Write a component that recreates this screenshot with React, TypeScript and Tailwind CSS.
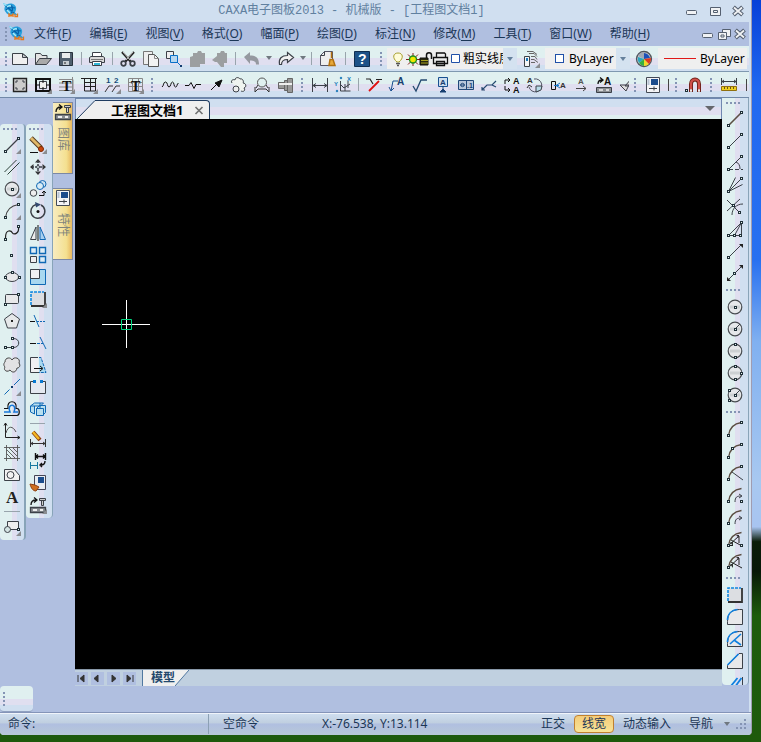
import React from "react";

type Tool = { label: string; icon?: React.ReactNode; flag?: boolean; kind?: "sep" | "grip" | "caret" };

/* small square handle used on most drawing icons */
const N = ({ x, y }: { x: number; y: number }) => (
  <rect x={x - 1} y={y - 1} width="2" height="2" fill="#e8f4f0" stroke="#203038" shapeRendering="crispEdges" />
);

const Icon = ({ children, flag }: { children?: React.ReactNode; flag?: boolean }) => (
  <svg viewBox="0 0 18 18" className="size-[18px] shrink-0" fill="none" stroke="#3c4148" strokeWidth="1" aria-hidden="true">
    {children}
    {flag && <path d="M18 13v5h-5z" fill="#8a8c90" stroke="none" />}
  </svg>
);

const B = "#0f68b4";
const sep: Tool = { label: "", kind: "sep" };
const grip: Tool = { label: "", kind: "grip" };

const T = ({ x, y, s = 9, c = "#111", children }: { x: number; y: number; s?: number; c?: string; children: string }) => (
  <text x={x} y={y} fontSize={s} fill={c} stroke="none" fontWeight="bold" fontFamily="Liberation Sans, sans-serif">
    {children}
  </text>
);

const TSerif = ({ x, y, s }: { x: number; y: number; s: number }) => (
  <text x={x} y={y} fontSize={s} fill="#111" stroke="none" fontWeight="bold" fontFamily="Liberation Serif, serif">T</text>
);

const libraryIcon = (
  <>
    <path d="M2 9c0-3 2-5 5-5M5 1.500l3 2.500l-3 2.500" stroke="#111" strokeWidth="1.300" />
    <path d="M10.500 2.500h6v2h-6zM12.500 4.500h2v5h-2z" fill="#ccc" />
    <path d="M1.500 11.500h15v5h-15z" fill="#8c9094" strokeWidth="1.300" />
    <path d="M4 14h4M11 14h3" stroke="#eee" strokeWidth="2" />
  </>
);
const propsIcon = (
  <>
    <path d="M2.500 1.500h13v15h-13z" fill="#f4f4f6" stroke="#444a55" />
    <path d="M7 3h7v6h-7z" fill="#1c4c8c" stroke="none" />
    <path d="M3.500 3v6h2v-6z" fill="#b8c4d4" stroke="none" />
    <path d="M5 12.500h8M10 10.500v4" />
  </>
);
const filletIcon = (
  <>
    <path d="M2 2h14v14h-14z" fill="#dcdee2" stroke="none" />
    <path d="M2 16h14v-14" stroke="#333" strokeWidth="1.800" />
    <path d="M2 15v-13h13" stroke="#1088e0" strokeDasharray="3 1" strokeWidth="1.600" />
  </>
);

const fileTools: Tool[] = [
  { label: "新建", icon: <><path d="M1.500 3.500h10l5 4v7h-15z" fill="#efefef" /><path d="M11.500 3.500v4h5z" fill="#c4c8cc" /></> },
  { label: "打开", icon: <><path d="M1.500 14.500v-11h5l1.500 2h5v3" fill="#e4e4e4" /><path d="M1.500 14.500l4-6h12l-5 6z" fill="#aaa" /></> },
  { label: "保存", icon: <><path d="M2.500 2.500h13v13h-13z" fill="#50606e" stroke="#28323c" /><path d="M5 3h8v5h-8z" fill="#e8ecec" stroke="none" /><path d="M6 11h6v4h-6z" fill="#c5ccd0" stroke="none" /><path d="M8 12v2" stroke="#222" /></> },
  sep,
  { label: "打印", icon: <><path d="M4.500 7v-4.500h8l1 1v3.500" fill="#fff" /><path d="M1.500 7.500l1.500-1h12l1.500 1v5h-15z" fill="#d8d8d8" /><path d="M4.500 11.500h9v4h-9z" fill="#fff" /><path d="M6 14h6" stroke="#30b8d8" strokeWidth="2" /><path d="M3 9.500h12" stroke="#777" /></> },
  sep,
  { label: "剪切", icon: <><path d="M3 2l9 10M15 2l-9 10" stroke="#222" strokeWidth="2.200" /><path d="M4 2l7 8M14 2l-7 8" stroke="#eee" strokeWidth=".8" /><circle cx="4.500" cy="13.500" r="2.300" strokeWidth="1.700" /><circle cx="13.500" cy="13.500" r="2.300" strokeWidth="1.700" /></> },
  { label: "复制", icon: <><path d="M1.500 1.500h9v13h-9z" fill="#eee" stroke="#777" /><path d="M6.500 4.500h6l4 4v8h-10z" fill="#f2f2f2" stroke="#555" /><path d="M12.500 4.500v4h4" stroke="#888" /></> },
  { label: "带基点复制", icon: <><path d="M1.500 1.500h7v7h-7z" fill="#eee" /><path d="M5.500 5.500h7v7h-7z" fill="#b8d8f0" stroke="#0870c8" /><path d="M12 12l4 4" stroke="#0870c8" /><path d="M15 15h2v2h-2z" fill="#123c70" stroke="none" /></> },
  { label: "粘贴", icon: <path d="M2 7l3-1v-3h4l1-2h3l1 2h3v11h-5v3h-10z" fill="#9c9fa1" stroke="none" /> },
  { label: "选择性粘贴", icon: <path d="M1 10l5-4v-3h3l1-2h3l1 2h2v10h-3v4h-3l-4-5h-2z" fill="#9c9fa1" stroke="none" /> },
  sep,
];

const editTools: Tool[] = [
  { label: "撤销", icon: <path d="M1 7l6-5v3.500c6 0 9 2 9 9h-3c0-3-2-4-6-4v3.500z" fill="#9599a0" stroke="none" /> },
  { label: "撤销列表", kind: "caret" },
  { label: "恢复", icon: <path d="M16.500 7.500l-6-5v3c-6 0-9 3-8 9h2c0-4 3-5 6-5v3z" fill="#f2f2f2" strokeWidth="1.200" /> },
  { label: "恢复列表", kind: "caret" },
  sep,
  { label: "清理", icon: <><path d="M5.500 1.500h8v14h-12v-10z" fill="#eee" stroke="#556" /><path d="M5.500 1.500v4h-4" /><path d="M12.500 2v6M10 15.500l1-6h3l2 6z" fill="#e8a838" stroke="#b07010" strokeWidth="1.500" /></> },
  sep,
  { label: "帮助", icon: <><path d="M1.500 1.500h15v15h-15z" fill="#1d5288" stroke="#102e50" /><T x={5} y={14} s={14} c="#fff">?</T></> },
];

const frameTools: Tool[] = [
  { label: "图幅设置", icon: <><path d="M2.500 2.500h13v13h-13z" fill="#ccc" stroke="#222" strokeWidth="1.400" /><path d="M5 7v-2h2M11 5h2v2M13 11v2h-2M7 13h-2v-2" /></> },
  { label: "调入图框", flag: true, icon: <><path d="M2 3h14v12h-14z" stroke="#111" strokeWidth="2" /><path d="M5.500 5.500h7v7h-7z" fill="#eee" /><path d="M9 3v4M9 11v4M2 9h4M12 9h4" stroke="#111" /></> },
  { label: "标题栏", flag: true, icon: <><path d="M2 3.500h14v11h-14M2 7h14M2 11h14M15.500 1v16" stroke="#888" /><TSerif x={5} y={15} s={14} /></> },
  { label: "参数栏", flag: true, icon: <path d="M1 2.500h16M4.500 3v12h11M15.500 3v12M4.500 6.500h11M4.500 10.500h11M10.500 3v12" stroke="#222" /> },
  { label: "生成序号", flag: true, icon: <><T x={3} y={7} s={8} c="#164a7c">1</T><T x={11} y={7} s={8} c="#164a7c">2</T><path d="M2 16l4-6h4M9 16l4-6h4" stroke="#333" /></> },
  { label: "明细表", flag: true, icon: <><path d="M2.500 2.500h14v13h-14zM2.500 6.500h14M2.500 10.500h14M6.500 3v12M12.500 3v12" stroke="#888" /><TSerif x={5} y={15} s={14} /></> },
];

const drawTools: Tool[] = [
  { label: "波浪线", icon: <path d="M1 11c2-1 1-5 3.500-5s1.500 5 3.500 5s1.500-5 3.500-5s1 5 3 5s1-3 3-4" stroke="#111" /> },
  { label: "双折线", icon: <path d="M1 9.500h4l2-3l3 6l2-4h5" stroke="#111" /> },
  { label: "箭头", icon: <path d="M4 14l8-8M8 7l7-3l-3 7z" fill="#111" stroke="#111" /> },
  { label: "齿形", icon: <><path d="M2 7c-2-3 2-4 3-3c0-3 4-3 5-1c3-1 4 3 3 4c3 0 4 4 1 5c2 3-1 4-3 3" fill="#f0f4f0" /><circle cx="6" cy="13" r="3" fill="#eee" /></> },
  { label: "圆弧拟合", icon: <><circle cx="9" cy="6.500" r="4.500" fill="#dff0f0" stroke="#555" /><path d="M2 11v5l3-3h8l3 3v-5M5 9l-2 3M13 9l2 3" stroke="#333" /></> },
  { label: "孔轴", icon: <><path d="M2.500 6.500h6v6h-6zM8.500 4.500h3v10h-3zM11.500 2.500h5v14h-5z" fill="#999" stroke="#666" /><path d="M3 8h13" stroke="#eee" strokeWidth="2" /></> },
];

const dimTools: Tool[] = [
  { label: "尺寸标注", icon: <path d="M1.500 2v14M16.500 2v14M2 9.500h14M5 7.500l-3 2l3 2M13 7.500l3 2l-3 2" /> },
  { label: "坐标标注", icon: <><path d="M6.500 5v10h10M6 8l4 4l6-4M11 8v7M14 5v7" /><g fill="#1878b8" stroke="#1878b8"><circle cx="3" cy="15" r=".8" /><circle cx="7" cy="2" r=".8" /></g><T x={0} y={10} s={6} c="#1878b8">Y</T><T x={13} y={5} s={6} c="#1878b8">X</T></> },
  sep,
  { label: "倒角标注", icon: <><path d="M1 3h4l3 5M11 3.500h6" stroke="#222" strokeWidth="1.200" /><path d="M4 15l10-10" stroke="#e01010" strokeWidth="1.800" /></> },
  { label: "引出说明", icon: <><path d="M3 15l2-10h5M1 11l2 4l3-3" stroke="#185090" /><T x={9} y={9} s={10} c="#184070">A</T></> },
  { label: "粗糙度", icon: <path d="M2 10l3 5l5-11h6" stroke="#244a70" strokeWidth="1.300" /> },
  { label: "基准代号", icon: <><path d="M4.500 1.500h9v9h-9z" fill="#cde" stroke="#185090" /><T x={6} y={9} s={8} c="#184070">A</T><path d="M9 10v3M6 16h6l-3-3z" fill="#184070" stroke="#184070" /></> },
  { label: "形位公差", icon: <><path d="M1.500 4.500h15v9h-15z" fill="#b8c8dc" stroke="#204878" /><path d="M9.500 5v8M3 9h5" stroke="#204878" /><circle cx="5.500" cy="9" r="1.700" stroke="#204878" /><T x={10} y={12} s={7} c="#184070">.1</T></> },
  { label: "焊接符号", icon: <path d="M2 14l5-5h5l4-4M12 9l4 2M2 11v3h3" stroke="#244a70" strokeWidth="1.200" /> },
  { label: "剖切符号", icon: <><path d="M2 8v-4h5M5 2l2 2l-2 2M2 10v4h5M5 12l2 2l-2 2" stroke="#111" /><T x={10} y={8} s={9}>A</T><T x={10} y={17} s={9}>A</T></> },
  { label: "向视图", icon: <><path d="M8 3a6.500 6.500 0 1 1-5 8" stroke="#556" /><path d="M10 10h6l-1 4l-5 2z" fill="#b8dce8" /><path d="M1 12l2-3l3 2" stroke="#333" /><T x={1} y={7} s={8} c="#333">A</T></> },
  { label: "中心孔", icon: <><path d="M2.500 5.500h4v8h-4z" stroke="#111" /><path d="M5 9.500h5M11 7l-4 2.500l4 2.500" stroke="#1878c8" /><T x={11} y={12} s={8} c="#333">A</T></> },
  { label: "旋转符号", icon: <><T x={6} y={8} s={8} c="#555">A</T><path d="M4 12.500h10M11 10l3 2.500l-3 2.500" stroke="#444" /></> },
  { label: "标注编辑", icon: <><path d="M3 8c0-3 1-4 4-4M5 1.500l3 2.500l-3 2.500" stroke="#111" strokeWidth="1.300" /><T x={9} y={9} s={10}>A</T><path d="M1.500 11.500h15v5h-15z" fill="#8c9094" /><path d="M4 14h4M11 14h3" stroke="#eee" strokeWidth="1.500" /></> },
];

const circle = (extra: React.ReactNode) => (
  <>
    <circle cx="9" cy="9" r="6.800" fill="#e6e8ea" stroke="#484c50" strokeWidth="1.200" />
    <path d="M4 9h10" stroke="#ccd0d2" strokeWidth="3" />
    {extra}
  </>
);

const drawColumn: Tool[] = [
  { label: "直线", flag: true, icon: <><path d="M2.500 15.500l13-13" strokeWidth="1.200" /><N x={2.5} y={15.5} /><N x={15.5} y={2.5} /></> },
  { label: "平行线", icon: <path d="M1.500 14l12-12M4.500 16.500l12-12" stroke="#2c4038" /> },
  { label: "圆", flag: true, icon: circle(<N x={9} y={9} />) },
  { label: "圆弧", flag: true, icon: <><path d="M2.500 15.500c1-8 6-12 13-13" stroke="#444" strokeWidth="1.200" /><N x={2.5} y={15.5} /><N x={15.5} y={2.5} /></> },
  { label: "样条", icon: <><path d="M2.500 14c0-10 6-7 7-5s7 1 6-6" stroke="#222" strokeWidth="1.200" /><N x={2.5} y={15} /><N x={15.5} y={2.5} /></> },
  { label: "点", icon: <N x={8.5} y={9.5} /> },
  { label: "椭圆", icon: <><ellipse cx="9" cy="9" rx="6.500" ry="4.500" fill="#e8e8ea" /><N x={2.5} y={9.5} /><N x={9} y={4.5} /><N x={16} y={9.5} /></> },
  { label: "矩形", icon: <><rect x="2.500" y="4.500" width="13" height="9" rx="1" fill="#e8e8ea" /><N x={2.5} y={14.5} /><N x={15.5} y={4.5} /></> },
  { label: "多边形", icon: <><path d="M9 1.500l7.500 5.500l-3 9h-9l-3-9z" fill="#e6e8ea" /><path d="M8 8h2v2h-2z" fill="#222" stroke="none" /></> },
  { label: "多段线", icon: <><path d="M2.500 13.500h8c7 0 7-9 0-9h-1" /><N x={2.5} y={13.5} /><N x={9.5} y={13.5} /><N x={9.5} y={4.5} /></> },
  { label: "云线", icon: <path d="M9 4c2-4 9-2 7 3c2 3 0 5-2 5c-1 5-5 5-7 2c-3 3-7 0-5-3c-2-2-1-4 0-5c0-5 6-5 7-2z" fill="#e2e2e4" stroke="#444" /> },
  { label: "中心线", flag: true, icon: <><path d="M1.500 16.500l5-5M11 7l6-6" stroke={B} /><path d="M8 8h2v2h-2z" fill="#123c70" stroke="none" /></> },
  { label: "等距线", icon: <><path d="M1 8.500h4c-2-9 10-9 8 0h1c3 0 3 7 0 7h-13" stroke="#111" strokeWidth="1.200" /><path d="M1 12h6c-4-9 8-9 4 0h4" stroke="#1878d8" strokeWidth="1.600" /></> },
  { label: "公式曲线", icon: <><path d="M2.500 1v14.500h14M1 3.500l1.500-2.500l1.500 2.500M14.500 14l2.500 1.500l-2.500 1.500" stroke="#222" /><path d="M3 11c2-8 7-7 10-1" stroke="#555" /></> },
  { label: "剖面线", icon: <path d="M1 3.500h16M1 14.500h16M3.500 1v16M14.500 1v16M4 10l5 5M4 6l8 8M6 4l8 8M10 4l4 4" stroke="#555" strokeWidth=".9" /> },
  { label: "局部放大", icon: <><path d="M1.500 3.500h10l5 6v5h-15z" fill="#f2f2f2" /><circle cx="7.500" cy="9" r="3.500" /></> },
  { label: "文字", icon: <text x="3" y="15" fontSize="17" fontWeight="bold" fill="#222" stroke="none" fontFamily="Liberation Serif, serif">A</text> },
  sep,
  { label: "块", flag: true, icon: <><path d="M4.500 3.500h11v8h-11z" fill="#eee" /><circle cx="4.500" cy="11.500" r="3" fill="#d4e4e4" /><N x={15.5} y={11.5} /></> },
];

const editColumn: Tool[] = [
  { label: "删除", flag: true, icon: <><path d="M2 2l10 10" stroke="#553c20" strokeWidth="5" /><path d="M2 2l9 9" stroke="#e0b868" strokeWidth="3" /><circle cx="12" cy="13" r="2.500" fill="#c84810" stroke="#802800" /><path d="M1 16.500h8" stroke="#111" /></> },
  { label: "平移", icon: <><path d="M9 1l3 3.500h-6zM9 17l3-3.500h-6zM1 9l3.500-3v6zM17 9l-3.500-3v6z" fill="#333" stroke="none" /><path d="M9 3v4M9 11v4M3 9h4M11 9h4" strokeWidth="1.500" strokeDasharray="2 1" /><circle cx="9" cy="9" r="1.500" /></> },
  { label: "平移复制", icon: <><circle cx="4.500" cy="13" r="3.300" fill="#eee" /><circle cx="13.500" cy="4" r="3.500" fill="#cfe4f4" stroke={B} /><circle cx="11" cy="6" r="3.500" fill="#d8ecf6" stroke={B} /><path d="M10 15.500h5v-4M13 13l2-2l2 2" stroke="#111" /></> },
  { label: "旋转", icon: <><path d="M7 2.500a7 7 0 1 0 5 .5" strokeWidth="1.500" /><path d="M6 0l6 2.500l-5 3z" fill="#344a70" stroke="none" /><circle cx="9" cy="9.500" r="1.500" fill="#111" stroke="none" /></> },
  { label: "镜像", icon: <><path d="M7 3v12.500h-5.500z" fill="#eee" /><path d="M11 3v12.500h5.500z" fill="#a8d0f0" stroke={B} /><path d="M9 1v16" stroke="#111" /></> },
  { label: "阵列", icon: <><path d="M1.500 1.500h6v6h-6zM10.500 1.500h6v6h-6zM10.500 10.500h6v6h-6z" fill="#dcecf6" stroke={B} strokeWidth="1.400" /><path d="M1.500 10.500h6v6h-6z" fill="#eee" /></> },
  { label: "缩放", icon: <><path d="M1.500 1.500h15v15h-15z" fill="#a8d8f0" stroke={B} /><path d="M1.500 1.500h9v9h-9z" fill="#f0f0f2" /></> },
  { label: "圆角过渡", flag: true, icon: filletIcon },
  { label: "裁剪", icon: <><path d="M1 9.500h5" stroke="#111" /><path d="M8 9.500h9" stroke={B} strokeDasharray="2 1" /><path d="M5 3l5 12" stroke={B} /></> },
  { label: "延伸", icon: <><path d="M1 9.500h6" stroke="#111" /><path d="M8 9.500h6" stroke={B} strokeDasharray="3 1" /><path d="M11 3l6 12" stroke={B} /></> },
  { label: "拉伸", icon: <><path d="M10 1.500h2l5 15h-7" fill="#a8d8f0" stroke={B} strokeDasharray="3 1" /><path d="M9 1.500h-7.500v15h8.500" fill="#f0f0f2" /><path d="M5 12.500h8M11 10l3 2.500l-3 2.500" stroke="#111" /></> },
  { label: "打断", icon: <><path d="M4 3.500h-2.500v12h15v-12h-2.500" fill="#e4e8f0" /><path d="M4 2h3v3h-3zM11 2h3v3h-3z" fill="#0878d0" stroke="none" /></> },
  { label: "分解", icon: <path d="M1.500 6l4-3h9l-3 3zM1.500 6v6l4 2v-8M7.500 8.500h7v7h-7zM7.500 8.500l3-3h6v7l-2 2M11 3v6" fill="#b8dff0" stroke={B} /> },
  sep,
  { label: "标注修改", icon: <><path d="M1.500 9v8M16.500 9v8M2 13.500h14M4 12l-2 1.500l2 1.500M14 12l2 1.500l-2 1.500" stroke="#333" /><path d="M4 2l7 8" stroke="#8a4010" strokeWidth="4" /><path d="M4 2l6 7" stroke="#f4b820" strokeWidth="2.400" /></> },
  { label: "尺寸驱动", icon: <><path d="M6.500 1v7M16.500 1v7M7 4.500h9M9 2.500l-2 2l2 2M14 2.500l2 2l-2 2M16 9c0 3-1 4-4 4M13 11l-2 2l2 2" stroke="#111" strokeWidth="1.400" /><path d="M1.500 10v7M8.500 10v7M2 13.500h6" stroke="#1878a0" /></> },
  { label: "特性匹配", icon: <><path d="M5.500 1.500h11v14h-11z" fill="#e8ecf2" stroke="#445" /><path d="M9 3h6v6h-6z" fill="#1c4c8c" stroke="none" /><path d="M1 10l5 1l4 2l-3 4c-3 0-5-3-6-7z" fill="#d07020" stroke="#904010" /></> },
  { label: "图库", flag: true, icon: libraryIcon },
];

const arc = <path d="M2.500 15.500c1-8 6-12 13-13" stroke="#5a4c40" strokeWidth="1.300" />;

const rightColumn: Tool[] = [
  { label: "两点线", icon: <><path d="M2.500 15.500l13-13" stroke="#5c5044" strokeWidth="1.600" /><N x={2.5} y={15.5} /><N x={15.5} y={2.5} /></> },
  { label: "单线", icon: <><path d="M2.500 15.500l13-13" /><N x={2.5} y={15.5} /><N x={15.5} y={2.5} /></> },
  { label: "角度线", icon: <><path d="M2.500 15.500l13-13M10 8c3 1 4 4 4 7" /><path d="M3 15.500h14" strokeDasharray="4 2" /><N x={2.5} y={15.5} /><N x={15.5} y={2.5} /></> },
  { label: "角等分线", icon: <><path d="M2.500 15.500l7-14M2.500 15.500l13-13M2.500 15.500l14-7" /><N x={2.5} y={15.5} /><N x={15.5} y={2.5} /></> },
  { label: "切线", icon: <><path d="M1 2l12 12M1 13l13-12M6 17c0-6 4-11 11-11" /><N x={7} y={7.5} /><N x={13.5} y={14} /></> },
  { label: "等分线", icon: <><path d="M2.500 15.500l13-13v13zM8.500 15.500l7-13" /><N x={2.5} y={15.5} /><N x={8.5} y={15.5} /><N x={14.5} y={15.5} /><N x={15.5} y={2.5} /></> },
  { label: "射线", icon: <><path d="M2.500 15.500l13-13" /><N x={2.5} y={15.5} /><path d="M13 2h4v4z" fill="#222" stroke="none" /></> },
  { label: "构造线", icon: <><path d="M2.500 15.500l13-13" /><N x={8.5} y={9.5} /><path d="M13 1h4v4zM1 13v4h4z" fill="#222" stroke="none" /></> },
  grip,
  { label: "圆心半径", icon: circle(<N x={9} y={9} />) },
  { label: "圆心直径", icon: circle(<><path d="M9 9l5-5" /><N x={9} y={9} /></>) },
  { label: "两点圆", icon: circle(<><N x={9} y={2.5} /><N x={9} y={15.5} /></>) },
  { label: "三点圆", icon: circle(<><N x={9} y={2.5} /><N x={9} y={15.5} /><N x={15.5} y={9} /></>) },
  { label: "两点半径圆", icon: circle(<><path d="M9 9l5-5" /><N x={9} y={9} /><N x={3.5} y={4} /><N x={3.5} y={14} /></>) },
  grip,
  { label: "三点弧", icon: <>{arc}<N x={2.5} y={15.5} /><N x={15.5} y={2.5} /></> },
  { label: "起点终点弧", icon: <>{arc}<N x={2.5} y={15.5} /><N x={6.5} y={6.5} /><N x={15.5} y={2.5} /></> },
  { label: "圆心弧", icon: <>{arc}<path d="M6 8l11 8" /><N x={2.5} y={15.5} /><N x={15.5} y={2.5} /></> },
  { label: "起点弧", icon: <>{arc}<path d="M9 16c0-5 2-6 6-6M13 8l3 2l-3 2" /><N x={2.5} y={15.5} /><N x={15.5} y={15.5} /></> },
  { label: "起点半径弧", icon: <>{arc}<path d="M9 16c0-5 2-6 6-6M13 8l3 2l-3 2" /><N x={2.5} y={15.5} /></> },
  { label: "弧角度", icon: <>{arc}<path d="M3 15l10-9v7M5 10l11 6M3 15.500h4" stroke="#222" /><path d="M10 5h3v3zM4 12h3v4z" fill="#333" stroke="none" /><N x={2.5} y={15.5} /><N x={15.5} y={15} /></> },
  { label: "弧半径", icon: <>{arc}<path d="M3 15l10-9v7M5 10l11 6" stroke="#222" /><path d="M10 5h3v3zM4 12h3v4z" fill="#333" stroke="none" /><N x={2.5} y={15.5} /></> },
  grip,
  { label: "圆角", icon: filletIcon },
  { label: "多圆角", icon: <><path d="M16.500 1.500v15h-15v-3c0-8 4-12 12-12z" fill="#e8e8ea" /><path d="M1.500 12c0-6 4-10 10-10.500" stroke="#1080e0" strokeWidth="1.600" /></> },
  { label: "倒角过渡", icon: <><path d="M16.500 1.500v15h-15v-3c0-8 4-12 12-12z" fill="#e8e8ea" /><path d="M1.500 12c0-6 4-10 10-10.500M4 14l11-10M8 10l7 5" stroke="#1080e0" strokeWidth="1.600" /></> },
  { label: "倒角", icon: <><path d="M13 1.500h3.500v15h-15v-3z" fill="#e8e8ea" /><path d="M1.500 13l11-11" stroke="#1080e0" strokeWidth="1.600" /></> },
  { label: "多倒角", icon: <><path d="M16.500 3v14" /><path d="M2.500 15l9-11M7.500 15l8-11" stroke="#1080e0" strokeWidth="1.800" /></> },
];

const ToolButton = ({ tool, className }: { tool: Tool; className: string }) => (
  <button type="button" aria-label={tool.label} className={`flex items-center justify-center shrink-0 hover:bg-white/50 ${className}`}>
    <Icon flag={tool.flag}>{tool.icon}</Icon>
  </button>
);

const Caret = ({ label }: { label: string }) => (
  <button type="button" aria-label={label} className="w-2 h-6 flex items-center justify-center shrink-0">
    <svg viewBox="0 0 6 4" className="w-1.5 h-1" aria-hidden="true"><path d="M0 0h6l-3 4z" fill="#707880" /></svg>
  </button>
);

const VGrip = () => (
  <div className="flex flex-col gap-0.5 w-3 shrink-0 items-center justify-center" aria-hidden="true">
    {[0, 1, 2, 3].map((i) => <i key={i} className="size-0.5 bg-[#8494b4]" />)}
  </div>
);

const HGrip = ({ short }: { short?: boolean }) => (
  <div className={`flex gap-0.5 shrink-0 items-center justify-center pr-1 ${short ? "h-2.5" : "h-3"}`} aria-hidden="true">
    {[0, 1, 2, 3].map((i) => <i key={i} className="size-0.5 bg-[#8494b4]" />)}
  </div>
);

const Row = ({ tools, wide }: { tools: Tool[]; wide?: boolean }) => (
  <>
    {tools.map((t, i) => {
      if (t.kind === "sep") return <div key={i} className="w-2 flex justify-center shrink-0"><i className="w-px my-1.5 bg-[#98a4ac]" /></div>;
      if (t.kind === "caret") return <Caret key={i} label={t.label} />;
      return <ToolButton key={i} tool={t} className={wide ? "w-[26px]" : "w-[23px]"} />;
    })}
  </>
);

const Column = ({ tools }: { tools: Tool[] }) => (
  <>
    {tools.map((t, i) => {
      if (t.kind === "grip") return <HGrip key={i} />;
      if (t.kind === "sep") return <div key={i} className="h-2 px-1 shrink-0"><i className="block h-px mt-[3px] bg-[#98a4ac]" /></div>;
      return <ToolButton key={i} tool={t} className="h-[22px]" />;
    })}
  </>
);

const menus = [
  ["文件", "F"], ["编辑", "E"], ["视图", "V"], ["格式", "O"], ["幅面", "P"], ["绘图", "D"],
  ["标注", "N"], ["修改", "M"], ["工具", "T"], ["窗口", "W"], ["帮助", "H"],
];

const barBg = "bg-[linear-gradient(#e0f0f0_0_50%,#e0dff0_50%_75%,#d0dff0_75%)]";
const colBg = "bg-[linear-gradient(90deg,#e0f0f0_0_50%,#e0dff0_50%_70%,#d0dff0_70%)]";

const Logo = () => (
  <svg viewBox="0 0 18 18" className="size-[18px] shrink-0" fill="none" aria-hidden="true">
    <path d="M1 1l4 1.500c2-1.500 6-1.500 8 1c2 2 1 5 0 7l3 3l-5-1c-3 1-6 0-7-2c-2-2-2-4-1-6z" fill="#28a0dc" />
    <path d="M4 4l8 7M9 3c2 2 2 6 0 8M4 8c2-2 6-3 9-2" stroke="#0860a8" strokeWidth="1.200" />
    <path d="M1.500 1.500l3 2M5 5c1-1 3-1.500 4-1M5 8l3 3" stroke="#a4ecfa" strokeWidth="1.500" />
    <path d="M7 15v-3l2 2l2-2v3M13 12v2.500h2.500v-3" stroke="#e87818" strokeWidth="1.300" />
  </svg>
);

const WindowButtons = ({ child }: { child?: boolean }) => (
  <div className={`flex shrink-0 items-center ${child ? "-space-x-0.5" : "gap-[5px] pr-1"}`}>
    <button type="button" aria-label="最小化"><Icon><rect x="3.500" y="8.500" width="10" height="4" rx="1" fill="#f0f2f4" stroke="#556070" /></Icon></button>
    <button type="button" aria-label="还原">
      <Icon>
        {child
          ? <><path d="M7.500 4.500h8v7h-8z" fill="#f0f2f4" stroke="#556070" /><path d="M3.500 7.500h8v7h-8z" fill="#f0f2f4" stroke="#556070" /><path d="M6 10h3v2h-3z" stroke="#556070" /></>
          : <><path d="M4.500 5.500h10v8h-10z" fill="#f0f2f4" stroke="#556070" /><path d="M7.500 8.500h4v2h-4z" stroke="#556070" /></>}
      </Icon>
    </button>
    <button type="button" aria-label="关闭"><Icon><path d="M4.500 5l9 8M13.500 5l-9 8" stroke="#556070" strokeWidth="4" /><path d="M5 5.500l8 7M13 5.500l-8 7" stroke="#f0f2f4" strokeWidth="1.800" /></Icon></button>
  </div>
);

const SelectArrow = () => (
  <span className="w-3.5 self-stretch bg-[#d4e2f0] flex items-center justify-center pointer-events-none shrink-0">
    <svg viewBox="0 0 6 4" className="w-1.5 h-1"><path d="M0 0h6l-3 4z" fill="#65809c" /></svg>
  </span>
);

const DockTab = ({ label, icon }: { label: string; icon: React.ReactNode }) => (
  <button type="button" className="w-5 h-[72px] flex flex-col items-center gap-1.5 border border-[#7c88a4] border-l-0 bg-[linear-gradient(90deg,#f8ecc0,#f4e090_70%,#e8b860)] text-[#80847c] text-xs leading-4">
    <Icon>{icon}</Icon>
    <span className="[writing-mode:vertical-rl] [text-orientation:sideways]">{label}</span>
  </button>
);

export default function App() {
  return (
    <div className="h-screen min-h-[640px] pr-[9px] pb-[7px] overflow-hidden text-xs text-[#1b3656] font-['Noto_Sans','Noto_Sans_CJK_SC',sans-serif] bg-[linear-gradient(#0840d8,#2068f0_12%,#2870f0_35%,#80b0f0_46%,#a8c8f0_65%,#a8c4f0_71%,#0a1c08_73%,#081808_77%,#1d5c0c_83%,#1e5a0c)]">
      <div className="h-full flex flex-col bg-[#d0dff0] border-r border-[#a09cb0] rounded-b-sm overflow-hidden">
        <header className="h-[22px] shrink-0 flex items-center pl-0.5">
          <Logo />
          <h1 className="flex-1 text-center whitespace-nowrap leading-4 text-[#60809f] font-['Liberation_Mono','Noto_Sans_CJK_SC',monospace]">
            CAXA电子图板2013 - 机械版 - [工程图文档1]
          </h1>
          <WindowButtons />
        </header>

        <nav className="h-6 mr-0.5 shrink-0 flex items-center bg-[#b0bfe0]">
          <div className="-mr-1"><VGrip /></div>
          <Logo />
          <ul className="flex flex-1 gap-[18px] ml-2 leading-4 whitespace-nowrap">
            {menus.map(([name, key]) => (
              <li key={key}>
                <button type="button">{name}(<u className="underline-offset-2">{key}</u>)</button>
              </li>
            ))}
          </ul>
          <WindowButtons child />
        </nav>

        <div className={`h-[26px] mr-0.5 shrink-0 flex border-b border-[#7f98b0] overflow-hidden ${barBg}`}>
          <div className="-mr-1 flex"><VGrip /></div>
          <Row tools={fileTools} />
          <Row tools={editTools} wide />
          <VGrip />
          <label className="flex items-center w-[130px] my-0.5 pl-0.5 bg-[#efefef] text-black overflow-hidden shrink-0">
            <svg viewBox="0 0 74 18" className="w-[74px] h-[18px] shrink-0" fill="none" stroke="#111" aria-hidden="true">
              <path d="M8 12c-5-4-4-9 1-9s6 5 1 9z" fill="#fffcd8" stroke="#a8a030" />
              <path d="M7 13.500h4M8 15.500h2" stroke="#555" strokeWidth="1.400" />
              <path d="M24 3v13M17 9.500h14M19 4.500l10 10M29 4.500l-10 10" stroke="#802018" />
              <circle cx="24" cy="9.500" r="3.500" fill="#f0e800" stroke="#209020" strokeWidth="1.400" />
              <path d="M31 8h8v7h-8z" fill="#28280c" />
              <path d="M37.500 8v-3c0-3 5-3 5 0v4" strokeWidth="1.500" />
              <path d="M32 10.500h7M32 13h7" stroke="#a8a020" />
              <path d="M47.500 7v-4h8l1 1v3M44.500 7.500h14v6h-14zM47.500 11.500h8v4h-8z" fill="#eee" strokeWidth="1.300" />
              <path d="M62.500 4.500h8v8h-8z" stroke="#2050a8" fill="#fff" />
            </svg>
            <select aria-label="图层" className="appearance-none flex-1 min-w-0 h-5 leading-5 text-clip overflow-hidden">
              <option>粗实线层</option>
            </select>
            <SelectArrow />
          </label>
          <ToolButton className="w-7" tool={{ label: "图层设置", flag: true, icon: <><path d="M5 1.500h6l4 3M7 3.500h5l3 3M9 6.500h4l2 3M9 9.500h3l4 3M9 12.500h4" stroke="#666" /><path d="M2.500 6.500h5v10h-5z" fill="#f4f4f4" /><path d="M4 8h2v3h-2z" fill="#1878b8" stroke="none" /></> }} />
          <label className="flex items-center w-[85px] my-0.5 bg-[#efefef] text-black shrink-0">
            <i className="size-[9px] ml-2.5 mr-[5px] border border-[#2050a8] bg-white shrink-0" />
            <select aria-label="颜色" className="appearance-none flex-1 min-w-0 h-5 leading-5 text-clip overflow-hidden">
              <option>ByLayer</option>
            </select>
            <SelectArrow />
          </label>
          <ToolButton className="w-7" tool={{ label: "颜色设置", icon: <><circle cx="9" cy="9" r="7.500" fill="#c8ccd0" stroke="#50555c" strokeWidth="1.300" /><g stroke="none"><path d="M9 9l-6-3a7 7 0 0 1 6-4z" fill="#a0a8b4" /><path d="M9 9v-6a7 7 0 0 1 6 5z" fill="#1c50b8" /><path d="M9 9l-6-2a7 7 0 0 0 1 6z" fill="#28a8c0" /><path d="M9 9l-5 4a7 7 0 0 0 5 3z" fill="#38b040" /><path d="M9 9v7a7 7 0 0 0 5-2z" fill="#f0d828" /><path d="M9 9l5 5a7 7 0 0 0 2-6z" fill="#e03820" /></g></> }} />
          <label className="flex flex-1 items-center min-w-[80px] my-0.5 mr-0.5 pl-1.5 gap-1 bg-[#efefef] text-black">
            <i className="w-8 h-px bg-[#e01818] shrink-0" />
            <select aria-label="线型" className="appearance-none flex-1 min-w-0 h-5 leading-5 text-clip overflow-hidden">
              <option>ByLayer</option>
            </select>
          </label>
        </div>

        <div className={`h-[26px] mr-0.5 shrink-0 flex border-b border-[#7088a8] overflow-hidden ${barBg}`}>
          <div className="-mr-1 flex"><VGrip /></div>
          <Row tools={frameTools} />
          <VGrip />
          <Row tools={drawTools} />
          <VGrip />
          <Row tools={dimTools} />
          <div className="w-3.5 flex overflow-hidden">
            <ToolButton className="w-[23px]" tool={{ label: "技术要求", icon: <path d="M14 2l-7 8h8M2 9h9l-3 6z" fill="#ddd" /> }} />
          </div>
          <VGrip />
          <ToolButton className="w-[23px]" tool={{ label: "特性", icon: propsIcon }} />
          <div className="w-1.5 flex items-center"><i className="w-px h-3 ml-1 bg-[#444]" /></div>
          <VGrip />
          <ToolButton className="w-[23px]" tool={{ label: "捕捉", icon: <><path d="M6 16v-8c0-6 8-6 8 0v8" stroke="#6c2018" strokeWidth="4" /><path d="M6 13v-5c0-6 8-6 8 0v5" stroke="#d05048" strokeWidth="2.200" /><path d="M5 14.500h2M13 14.500h2" stroke="#eee" strokeWidth="2.500" /><N x={1.5} y={14} /></> }} />
          <VGrip />
          <ToolButton className="w-[23px]" tool={{ label: "测量", icon: <><path d="M1.500 2v7M16.500 2v7M2 5.500h14M4 4l-2 1.500l2 1.500M14 4l2 1.500l-2 1.500" /><path d="M1.500 10.500h15v4h-15z" fill="#f0d020" stroke="#907010" /><path d="M4.500 11v2M7.500 11v2M10.500 11v2M13.500 11v2" stroke="#705010" /></> }} />
          <div className="flex-1 flex items-center"><i className="w-px h-3 ml-1.5 bg-[#444]" /></div>
        </div>

        <div className="flex-1 min-h-0 mr-0.5 flex bg-[#b0bfe0]">
          <aside className="w-[75px] shrink-0 flex flex-col justify-between">
            <div className="flex items-start">
              <div className={`w-[26px] mt-[26px] pb-0.5 flex flex-col border-r-2 border-[#88a4b8] rounded-sm ${colBg}`}>
                <HGrip short />
                <Column tools={drawColumn} />
              </div>
              <div className={`w-[27px] pr-[3px] mt-[26px] pb-0.5 flex flex-col border-r border-[#88a4b8] rounded-sm ${colBg}`}>
                <HGrip short />
                <Column tools={editColumn} />
              </div>
              <div className="flex flex-col gap-3.5 pt-1">
                <DockTab label="图库" icon={libraryIcon} />
                <DockTab label="特性" icon={propsIcon} />
              </div>
            </div>
            <div className={`w-[33px] h-[26px] flex rounded-sm border-b border-[#90a0c0] ${barBg}`}>
              <div className="-ml-0.5 flex"><VGrip /></div>
            </div>
          </aside>

          <main className="flex-1 min-w-0 flex flex-col">
            <div className="h-[21px] shrink-0 flex items-end border border-b-0 border-[#7088b0] bg-[linear-gradient(#d0dff0_0_40%,#e0dff0_40%_80%,#e0f0f0_80%)]">
              <svg viewBox="0 0 20 19" className="w-5 h-[19px] shrink-0" aria-hidden="true">
                <path d="M1 19L19 .5h1V19z" fill="#efefef" /><path d="M1 19L19 .5h1" fill="none" stroke="#203c60" />
              </svg>
              <div className="h-[19px] flex items-center gap-2 pl-[15px] pr-0.5 border-t border-r border-[#203c60] rounded-tr-sm bg-[#efefef]">
                <button type="button" className="font-bold text-[13px] text-black leading-4 whitespace-nowrap">工程图文档1</button>
                <button type="button" aria-label="关闭文档" className="flex items-center justify-center">
                  <svg viewBox="0 0 16 16" className="size-4" stroke="#707070" strokeWidth="1.600" aria-hidden="true"><path d="M4.500 5l7 7M11.500 5l-7 7" /></svg>
                </button>
              </div>
              <button type="button" aria-label="文档列表" className="ml-auto mr-1.5 mb-2">
                <svg viewBox="0 0 10 5" className="w-2.5 h-[5px]" aria-hidden="true"><path d="M0 0h10l-5 5z" fill="#65686c" /></svg>
              </button>
            </div>

            <div className="flex-1 min-h-0 relative bg-black">
              {/* drawing cursor */}
              <svg viewBox="0 0 49 49" className="absolute left-[27px] top-[181px] size-[49px]" fill="none" aria-hidden="true">
                <path d="M24.500 0v48M0 24.500h48" stroke="#fff" />
                <path d="M19.500 19.500h10v10h-10z" stroke="#00d880" />
              </svg>
            </div>

            <div className="h-[17px] shrink-0 flex items-center bg-[#c0d0e0] border-t border-[#8898a8]">
              {["M3 3v7M9 3v7l-4-3.500z", "M7 3v7l-4-3.500z", "M5 3v7l4-3.500z", "M10 3v7M4 3v7l4-3.500z"].map((d, i) => (
                <button key={d} type="button" aria-label={["首页", "上一页", "下一页", "末页"][i]} className="w-[13px] h-[13px] mr-[3px] bg-[#b0bfe0]">
                  <svg viewBox="0 0 12 12" className="size-3" fill="#333" stroke="#333" strokeWidth="1" aria-hidden="true"><path d={d} /></svg>
                </button>
              ))}
              <button type="button" className="h-4 ml-[3px] flex items-center font-bold text-[#24486c] leading-4">
                <span className="h-4 pl-2 border-l border-[#5078a0] bg-[#efefef] whitespace-nowrap">模型</span>
                <svg viewBox="0 0 14 16" className="w-3.5 h-4" aria-hidden="true"><path d="M0 0h14l-14 16z" fill="#efefef" /><path d="M14 0l-14 16" stroke="#5078a0" /></svg>
              </button>
            </div>
            <div className="h-[26px] shrink-0" />
          </main>

          <aside className={`w-[27px] shrink-0 mb-[27px] flex flex-col overflow-hidden border-r border-[#88a4b8] rounded-b-sm ${colBg}`}>
            <HGrip short />
            <Column tools={rightColumn} />
          </aside>
        </div>

        <footer className="h-[23px] shrink-0 flex items-center leading-4 whitespace-nowrap border-t border-[#8494b8] shadow-[inset_0_1px_#f0f4fa] bg-[linear-gradient(#d0dff0,#c0cfe0_45%,#b0bfe0_50%,#b8c8d8)]">
          <label htmlFor="cmd" className="pl-2">命令:</label>
          <input id="cmd" className="flex-1 min-w-0 bg-transparent outline-none" />
          <div className="w-[333px] h-5 flex items-center border-l border-[#8ca0b4]">
            <span className="w-[99px] pl-3.5">空命令</span>
            <span className="pl-3.5">X:-76.538, Y:13.114</span>
          </div>
          <button type="button">正交</button>
          <button type="button" aria-pressed="true" className="mx-[9px] w-10 h-[18px] rounded-sm border border-[#c08030] bg-[linear-gradient(#f4cc78,#f8e498)]">线宽</button>
          <button type="button">动态输入</button>
          <button type="button" className="ml-[18px]">导航</button>
          <div className="ml-2.5 mr-1"><Caret label="导航模式" /></div>
          <svg viewBox="0 0 12 12" className="size-3 mr-1 shrink-0" fill="#8494b4" aria-hidden="true">
            <path d="M9 1h2v2h-2zM9 5h2v2h-2zM5 5h2v2h-2zM9 9h2v2h-2zM5 9h2v2h-2zM1 9h2v2h-2z" />
          </svg>
        </footer>
      </div>
    </div>
  );
}
